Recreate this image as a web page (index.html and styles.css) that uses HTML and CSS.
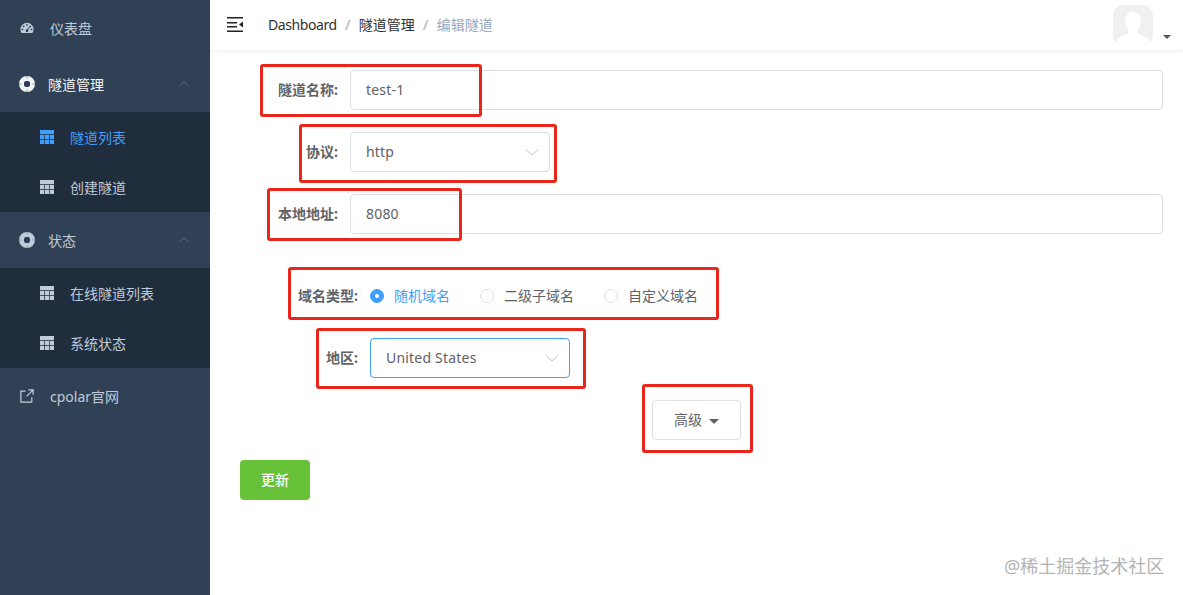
FILE: index.html
```html
<!DOCTYPE html>
<html lang="zh">
<head>
<meta charset="utf-8">
<title>编辑隧道</title>
<link rel="stylesheet" href="styles.css">
</head>
<body>
<div class="app">
  <aside class="sidebar">
    <a class="menu-item"><svg class="ico" viewBox="0 0 16 16"><path class="fill" fill-rule="evenodd" d="M8 2a7.500 7.500 0 0 0-7.500 7.500c0 1.600.5 3 1.300 4.200h12.400c.8-1.200 1.300-2.600 1.300-4.200A7.500 7.500 0 0 0 8 2zM8 3.400a1 1 0 1 1 0 2 1 1 0 0 1 0-2zM4.200 5a1 1 0 1 1 0 2 1 1 0 0 1 0-2zM11.800 5a1 1 0 1 1 0 2 1 1 0 0 1 0-2zM2.800 8.600a1 1 0 1 1 0 2 1 1 0 0 1 0-2zM13.200 8.600a1 1 0 1 1 0 2 1 1 0 0 1 0-2zM10.600 6.200l.7.500L9.300 10a1.600 1.600 0 1 1-1-.6z"/></svg><span class="label">仪表盘</span></a>

    <div class="menu-item group open"><svg class="ico wide" viewBox="0 0 16 16"><circle class="ring" cx="8" cy="8" r="5.500"/><path class="notch" d="M8 0v2.500M8 13.500V16M0 8h2.500M13.500 8H16"/><circle class="hub" cx="8" cy="8" r="3"/></svg><span class="label">隧道管理</span><svg class="up" viewBox="0 0 12 12"><path d="M1.500 8 6 3.800 10.500 8"/></svg></div>
    <div class="submenu">
      <a class="sub-item active"><svg class="grid" viewBox="0 0 14 14"><path d="M0 0h14v4.200H0zM0 4.900h4.300v4.200H0zM5 4.900h4v4.200H5zM9.700 4.900H14v4.200H9.700zM0 9.800h4.300V14H0zM5 9.800h4V14H5zM9.700 9.800H14V14H9.700z"/></svg>隧道列表</a>
      <a class="sub-item"><svg class="grid" viewBox="0 0 14 14"><path d="M0 0h14v4.200H0zM0 4.900h4.300v4.200H0zM5 4.900h4v4.200H5zM9.700 4.900H14v4.200H9.700zM0 9.800h4.300V14H0zM5 9.800h4V14H5zM9.700 9.800H14V14H9.700z"/></svg>创建隧道</a>
    </div>

    <div class="menu-item group"><svg class="ico wide" viewBox="0 0 16 16"><circle class="ring dim" cx="8" cy="8" r="5.500"/><path class="notch" d="M8 0v2.500M8 13.500V16M0 8h2.500M13.500 8H16"/><circle class="hub" cx="8" cy="8" r="3"/></svg><span class="label">状态</span><svg class="up" viewBox="0 0 12 12"><path d="M1.500 8 6 3.800 10.500 8"/></svg></div>
    <div class="submenu">
      <a class="sub-item"><svg class="grid" viewBox="0 0 14 14"><path d="M0 0h14v4.200H0zM0 4.900h4.300v4.200H0zM5 4.900h4v4.200H5zM9.700 4.900H14v4.200H9.700zM0 9.800h4.300V14H0zM5 9.800h4V14H5zM9.700 9.800H14V14H9.700z"/></svg>在线隧道列表</a>
      <a class="sub-item"><svg class="grid" viewBox="0 0 14 14"><path d="M0 0h14v4.200H0zM0 4.900h4.300v4.200H0zM5 4.900h4v4.200H5zM9.700 4.900H14v4.200H9.700zM0 9.800h4.300V14H0zM5 9.800h4V14H5zM9.700 9.800H14V14H9.700z"/></svg>系统状态</a>
    </div>

    <a class="menu-item"><svg class="ico" viewBox="0 0 16 16"><path class="line" d="M6.500 2.500H1V15h12.500V9.500M9.500 1H15v5.500M15 1 7.500 8.500"/></svg><span class="label">cpolar官网</span></a>
  </aside>

  <main class="main">
    <header class="navbar">
      <svg class="hamburger" viewBox="0 0 16 15"><path d="M0 0h16v1.500H0zM0 5h10v1.500H0zM0 9h10v1.500H0zM0 13.500h16V15H0zM16 4.500v6l-4-3z"/></svg>
      <nav class="crumbs">
        <span class="crumb latin">Dashboard</span><span class="sep">/</span>
        <span class="crumb">隧道管理</span><span class="sep">/</span>
        <span class="crumb last">编辑隧道</span>
      </nav>
      <div class="avatar-wrap">
        <div class="avatar"><svg viewBox="0 0 40 40"><path d="M20 7c-5 0-8 4-8 9 0 3.500 1.500 6.500 3.500 8.500V28L4 34v6h32v-6l-11.500-6v-3.500c2-2 3.500-5 3.500-8.500 0-5-3-9-8-9z"/></svg></div>
        <span class="caret"></span>
      </div>
    </header>

    <form class="form">
      <div class="row"><label class="field-label">隧道名称:</label><div class="input">test-1</div></div>
      <div class="row"><label class="field-label">协议:</label><div class="input select">http<svg class="chev" viewBox="0 0 14 14"><path d="M1 4.500 7 10l6-5.500"/></svg></div></div>
      <div class="row"><label class="field-label">本地地址:</label><div class="input">8080</div></div>
      <div class="row nested radios-row">
        <label class="field-label">域名类型:</label>
        <div class="radios">
          <span class="radio on"><i></i><b>随机域名</b></span>
          <span class="radio"><i></i><b>二级子域名</b></span>
          <span class="radio"><i></i><b>自定义域名</b></span>
        </div>
      </div>
      <div class="row nested"><label class="field-label">地区:</label><div class="input select focus">United States<svg class="chev" viewBox="0 0 14 14"><path d="M1 4.500 7 10l6-5.500"/></svg></div></div>
      <div class="adv-row"><button type="button" class="btn adv"><span class="btn-text">高级</span><span class="adv-caret"></span></button></div>
      <button type="button" class="btn primary"><span class="btn-text">更新</span></button>
    </form>
  </main>
</div>

<span class="mark m1"></span>
<span class="mark m2"></span>
<span class="mark m3"></span>
<span class="mark m4"></span>
<span class="mark m5"></span>
<span class="mark m6"></span>
<span class="watermark">@稀土掘金技术社区</span>
</body>
</html>
```
FILE: styles.css
```css
* { box-sizing: border-box; }
html, body { margin: 0; height: 100%; overflow: hidden; }
body {
  font-family: "Noto Sans", "Noto Sans CJK SC", sans-serif;
  font-size: 14px;
  color: #606266;
  background: #fff;
  position: relative;
}
.app { display: flex; height: 595px; }

/* sidebar */
.sidebar { width: 210px; flex: none; background: #304156; color: #bfcbd9; }
.menu-item { height: 56px; display: flex; align-items: center; padding-left: 20px; position: relative; }
.label { margin-left: 16px; }
.group .label { margin-left: 13px; }
.group.open .label { color: #f4f4f5; }
.ico { width: 14px; height: 14px; flex: none; }
.ico.wide { width: 16px; height: 16px; margin-left: -1px; }
.fill { fill: #bfcbd9; }
.line { fill: none; stroke: #bfcbd9; stroke-width: 1.400; }
.ring { fill: none; stroke: #f4f4f5; stroke-width: 5; }
.ring.dim { stroke: #bfcbd9; }
.notch { fill: none; stroke: #8796ab; stroke-width: 1; }
.hub { fill: #2b3a58; }
.up { position: absolute; right: 20px; top: 22px; width: 12px; height: 12px; fill: none; stroke: #5d6f85; stroke-width: 1; }
.submenu { background: #1f2d3d; }
.sub-item { height: 50px; display: flex; align-items: center; padding-left: 40px; gap: 16px; }
.sub-item.active { color: #409eff; }
.grid { width: 14px; height: 14px; fill: currentColor; flex: none; }

/* main */
.main { flex: 1; min-width: 0; }
.navbar {
  height: 50px; display: flex; align-items: center; padding-left: 17px;
  box-shadow: 0 1px 4px rgba(0, 21, 41, .08);
}
.hamburger { width: 16px; height: 15px; fill: #222; margin-top: -1px; flex: none; }
.crumbs { margin-left: 25px; color: #303133; display: flex; align-items: center; padding-bottom: 2px; }
.latin { letter-spacing: -.42px; }
.sep { width: 6px; margin: 0 8px; text-align: center; color: #c0c4cc; font-weight: 700; }
.crumb.last { color: #97a8be; }
.avatar-wrap { margin-left: auto; margin-right: 12px; display: flex; align-items: flex-end; height: 40px; gap: 10px; }
.avatar { width: 40px; height: 40px; border-radius: 10px; background: #f0f0f0; overflow: hidden; }
.avatar svg { display: block; fill: #fff; }
.caret { width: 0; height: 0; border: 4px solid transparent; border-top: 4px solid #555; border-bottom: 0; margin-bottom: 6px; }

/* form */
.form { padding: 20px 20px 0 30px; }
.row { display: flex; align-items: center; margin-bottom: 22px; }
.field-label { width: 110px; padding: 0 12px 2px 0; text-align: right; font-weight: 700; flex: none; color: #606266; }
.row.nested .field-label { width: 130px; }
.radios-row { margin-top: 42px; height: 40px; }
.input {
  flex: 1; height: 40px; border: 1px solid #dcdfe6; border-radius: 4px;
  padding: 0 15px; line-height: 38px; position: relative; letter-spacing: .2px;
}
.select { flex: none; width: 200px; }
.focus { border-color: #409eff; }
.chev { position: absolute; right: 10px; top: 12px; width: 14px; height: 14px; fill: none; stroke: #c0c4cc; stroke-width: 1; }
.radios { display: flex; gap: 30px; }
.radio { display: flex; align-items: center; gap: 10px; }
.radio b { font-weight: 400; padding-bottom: 2px; }
.radio i { width: 14px; height: 14px; border: 1px solid #dcdfe6; border-radius: 50%; background: #fff; }
.radio.on { color: #409eff; }
.radio.on i { background: #409eff; border-color: #409eff; display: flex; align-items: center; justify-content: center; }
.radio.on i::after { content: ""; width: 4px; height: 4px; border-radius: 50%; background: #fff; }
.adv-row { display: flex; justify-content: center; margin-bottom: 20px; margin-left: -10px; }
.btn { height: 40px; border-radius: 4px; font: inherit; padding: 0; cursor: pointer; }
.btn-text { position: relative; display: inline-block; padding-bottom: 2px; }
.adv { width: 89px; border: 1px solid #dcdfe6; background: #fff; color: #606266; }
.adv-caret { display: inline-block; width: 0; height: 0; border: 5px solid transparent; border-top: 5px solid #606266; border-bottom: 0; margin-left: 7px; vertical-align: middle; }
.primary { width: 70px; border: 0; background: #67c23a; color: #fff; font-weight: 500; display: block; }

/* annotation rectangles drawn over the page */
.mark { position: absolute; border: 3px solid #e8261c; border-radius: 3px; pointer-events: none; }
.m1 { left: 260px; top: 64px; width: 222px; height: 53px; }
.m2 { left: 299px; top: 124px; width: 258px; height: 59px; }
.m3 { left: 267px; top: 188px; width: 195px; height: 53px; }
.m4 { left: 288px; top: 267px; width: 431px; height: 53px; }
.m5 { left: 316px; top: 328px; width: 270px; height: 61px; }
.m6 { left: 642px; top: 384px; width: 111px; height: 69px; }

.watermark { position: absolute; left: 1004px; top: 553px; font-size: 18px; line-height: 26px; color: #b4b4b4; white-space: nowrap; }
```
